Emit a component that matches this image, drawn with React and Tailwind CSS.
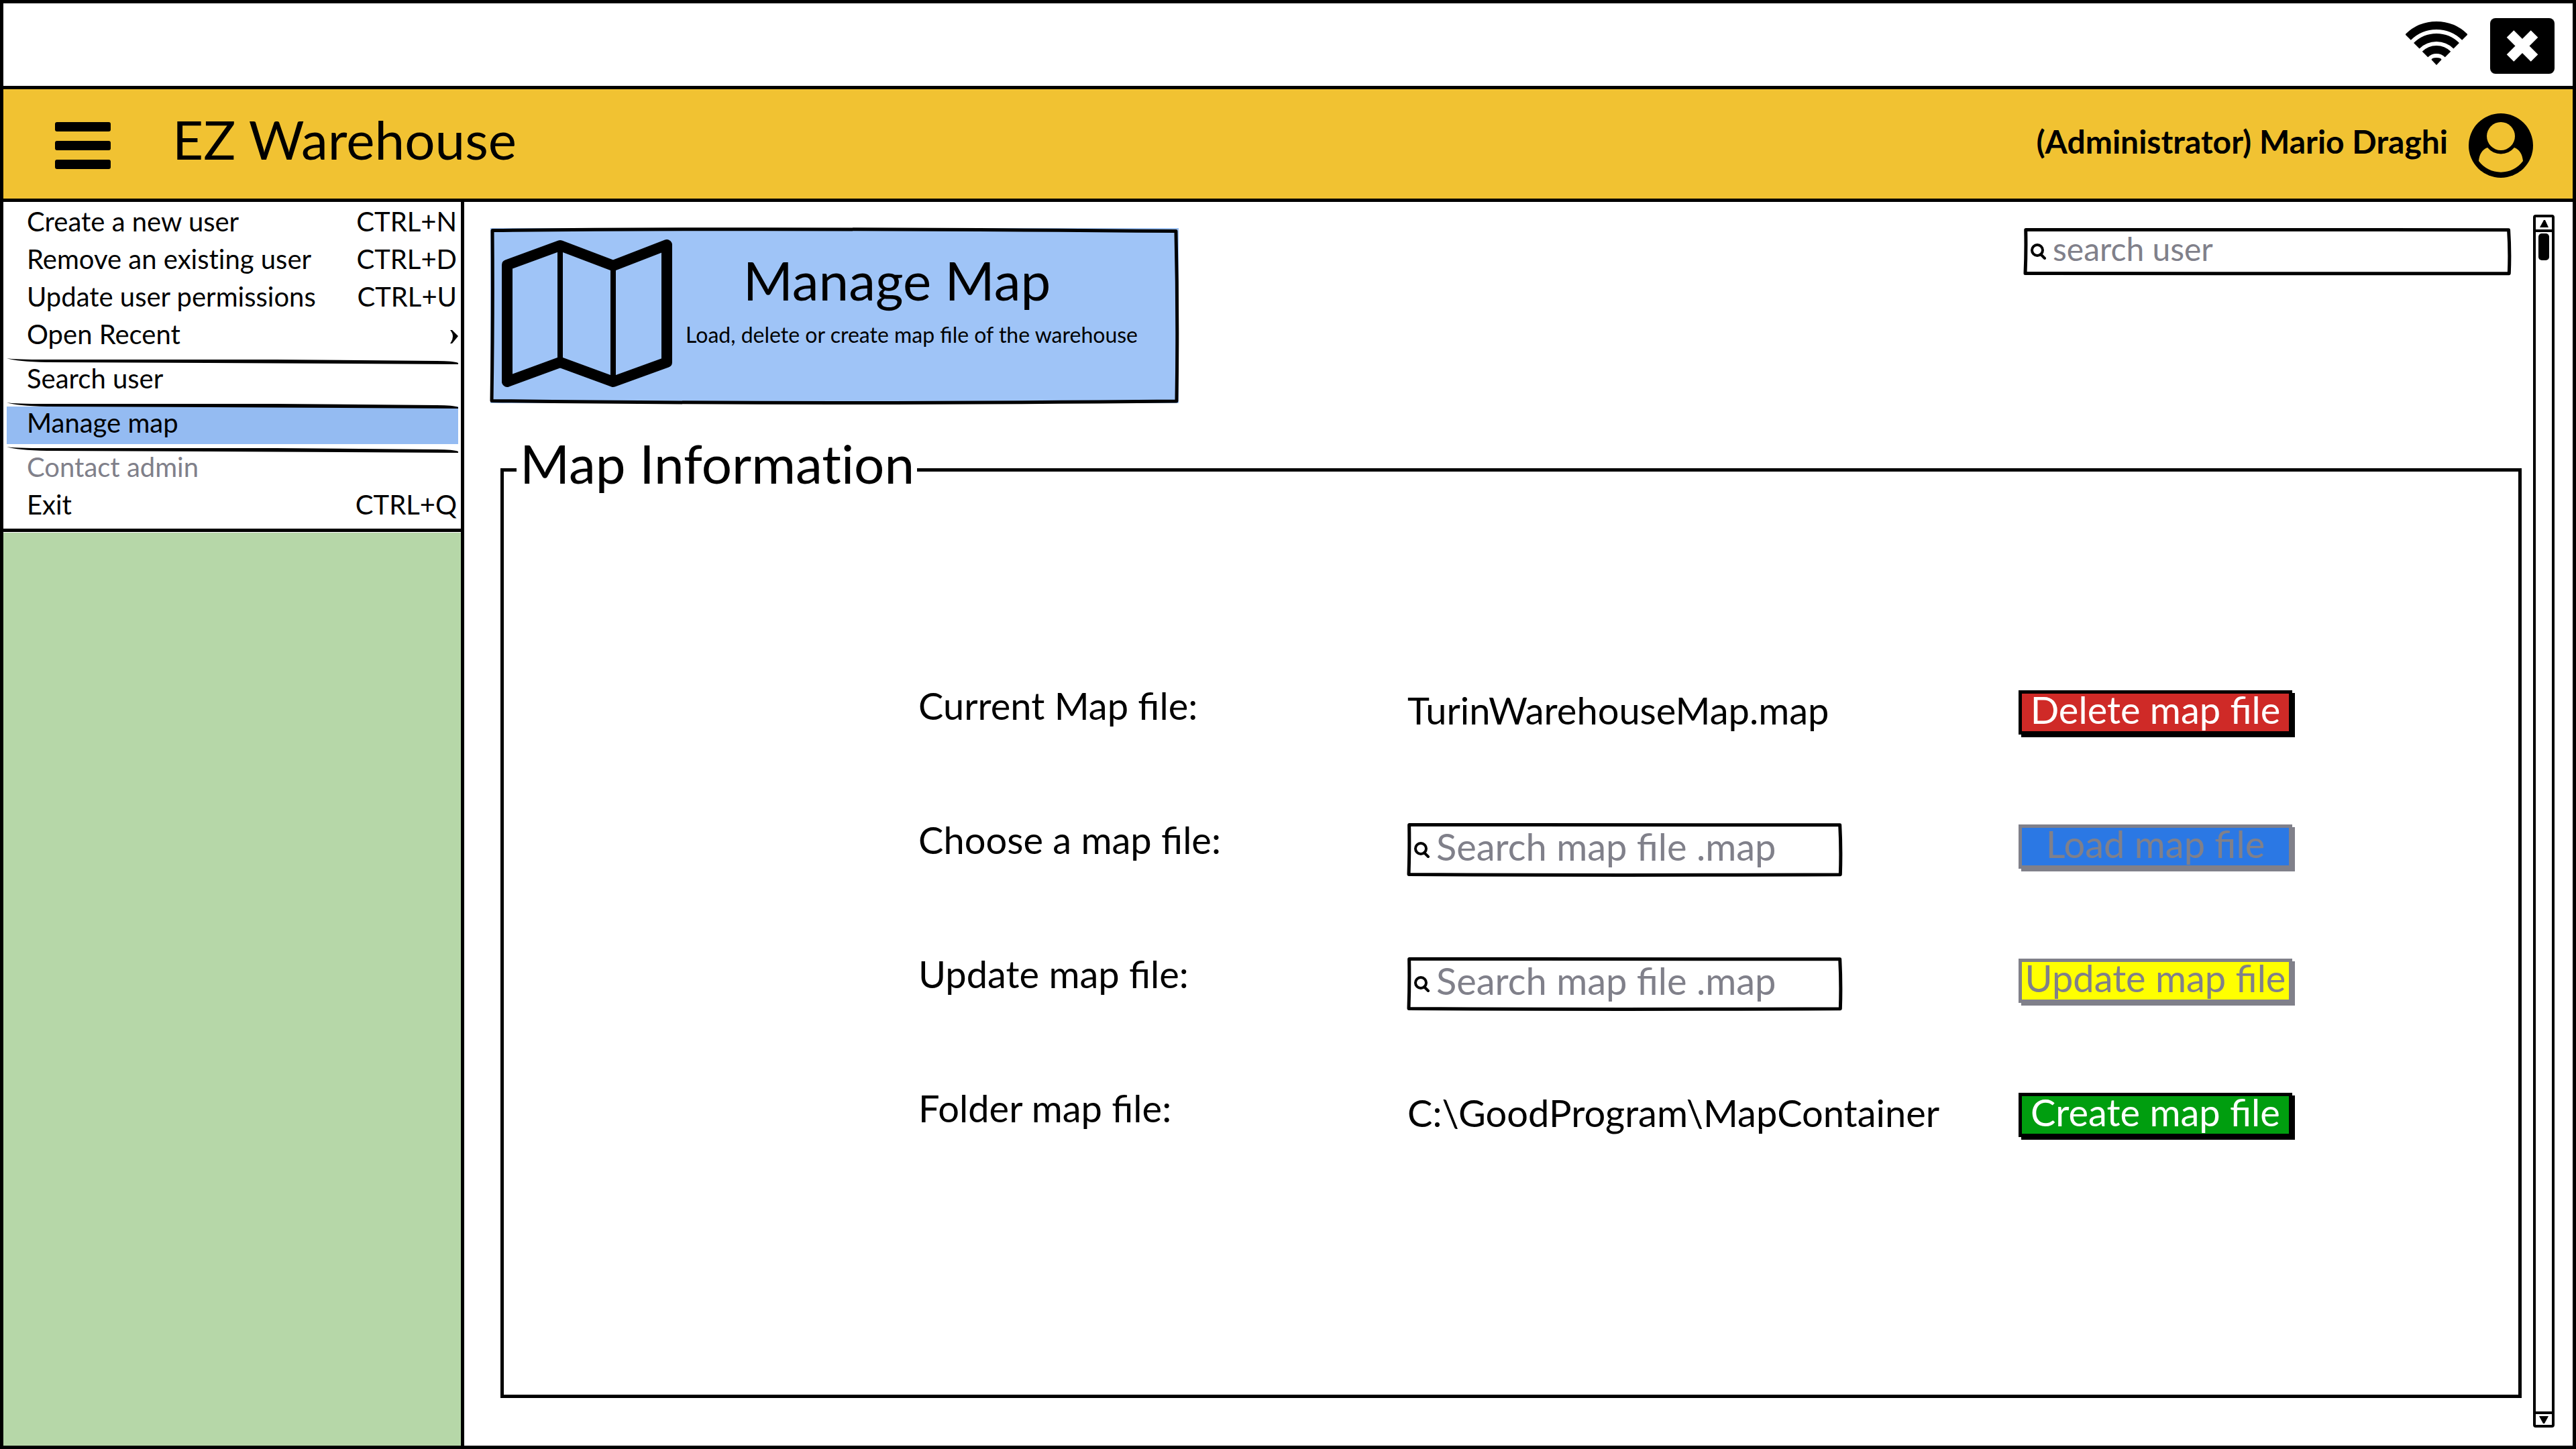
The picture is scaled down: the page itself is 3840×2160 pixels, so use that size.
import React from "react";

const menuGroups = [
  [
    { label: "Create a new user", shortcut: "CTRL+N" },
    { label: "Remove an existing user", shortcut: "CTRL+D" },
    { label: "Update user permissions", shortcut: "CTRL+U" },
    { label: "Open Recent", submenu: true },
  ],
  [{ label: "Search user" }],
  [{ label: "Manage map", active: true }],
  [
    { label: "Contact admin", disabled: true },
    { label: "Exit", shortcut: "CTRL+Q" },
  ],
];

/* Slightly uneven outline laid over a box, as if drawn by hand. */
function SketchOutline() {
  return (
    <svg
      className="pointer-events-none absolute inset-[2px] h-[calc(100%-4px)] w-[calc(100%-4px)] overflow-visible"
      viewBox="0 0 1000 1000"
      preserveAspectRatio="none"
      fill="none"
      stroke="black"
      strokeWidth="5"
      strokeLinejoin="round"
      aria-hidden="true"
    >
      <path
        vectorEffect="non-scaling-stroke"
        d="M1 6 Q400 -10 998 10 Q1001 500 999 996 Q450 1016 0 994 Q2 500 1 6 Z"
      />
    </svg>
  );
}

function WifiIcon() {
  return (
    <svg className="mb-2 h-[66px] w-[92px]" viewBox="0 0 92 66" fill="none" stroke="black" strokeWidth="12" role="img" aria-label="Wi-Fi">
      <path d="M3.6 23.6 A60 60 0 0 1 88.4 23.6" />
      <path d="M16.3 36.3 A42 42 0 0 1 75.7 36.3" />
      <path d="M29 49 A24 24 0 0 1 63 49" />
      <path d="M46 65 L38.5 57 Q39 54 46 54 Q53 54 53.5 57 Z" fill="black" stroke="none" />
    </svg>
  );
}

function CloseIcon() {
  return (
    <svg className="h-[83px] w-[96px]" viewBox="0 0 96 83" aria-hidden="true">
      <rect width="96" height="83" rx="8" />
      <path d="M30 23.5 L66 59.5 M66 23.5 L30 59.5" stroke="white" strokeWidth="15" />
    </svg>
  );
}

function MenuIcon() {
  return (
    <svg className="h-[70px] w-[83px]" viewBox="0 0 83 70" aria-hidden="true">
      <rect width="83" height="14" rx="3" />
      <rect y="28" width="83" height="14" rx="3" />
      <rect y="56" width="83" height="14" rx="3" />
    </svg>
  );
}

function AvatarIcon() {
  return (
    <svg className="size-24" viewBox="0 0 96 96" aria-hidden="true">
      <circle cx="48" cy="48" r="48" />
      <circle cx="48" cy="34" r="21" fill="#f1c232" />
      <path
        d="M28 51 C20 54 16 61 15 71 A41 41 0 0 0 81 71 C80 61 76 54 68 51 A26 26 0 0 1 28 51 Z"
        fill="#f1c232"
      />
    </svg>
  );
}

function MapIcon() {
  return (
    <svg className="h-[221px] w-[254px] shrink-0" viewBox="0 0 254 221" fill="none" stroke="black" strokeLinejoin="round" aria-hidden="true">
      <path d="M8 38 L87 9 L166 39 L246 8 V183 L166 212 L87 183 L8 212 Z" strokeWidth="16" />
      <path d="M87 9 V183 M166 39 V212" strokeWidth="8" />
    </svg>
  );
}

function SearchIcon() {
  return (
    <svg className="size-[24px] shrink-0" viewBox="0 0 24 24" fill="none" stroke="black" strokeWidth="4" strokeLinecap="round" aria-hidden="true">
      <circle cx="10" cy="10" r="8" />
      <path d="M15 16 L21 22" />
    </svg>
  );
}

function SearchField({ label, size }) {
  return (
    <label className={`relative flex items-center pl-[10px] pr-3 ${size}`}>
      <SketchOutline />
      <SearchIcon />
      <input
        type="text"
        placeholder={label}
        aria-label={label}
        className="ml-[9px] h-full w-full min-w-0 bg-transparent pb-[10px] outline-none placeholder:text-[#80808a]"
      />
    </label>
  );
}

function MenuItem({ item }) {
  return (
    <li>
      <button
        type="button"
        disabled={item.disabled}
        className={`flex h-14 w-full items-center justify-between pb-2 pl-[30px] text-left disabled:text-[#80808a] ${
          item.active ? "bg-[#94bbf2]" : ""
        }`}
      >
        <span>{item.label}</span>
        {item.shortcut && <span className="pr-[2px]">{item.shortcut}</span>}
        {item.submenu && (
          <svg className="mt-2 h-5 w-3" viewBox="0 0 12 20" aria-hidden="true">
            <path d="M0 0 L3 0 L12 9 L3 20 L0 20 Q8 9 0 0 Z" />
          </svg>
        )}
      </button>
    </li>
  );
}

function MenuDivider() {
  return (
    <svg className="block h-[10px] w-full overflow-visible" viewBox="0 0 672 10" preserveAspectRatio="none" aria-hidden="true">
      <path d="M0 4 Q10 6 60 6 L400 6 L640 8 Q665 8 672 11 L672 13 L300 11 L60 10 Q15 9 0 4 Z" />
    </svg>
  );
}

function Sidebar() {
  return (
    <aside className="flex w-[687px] shrink-0 flex-col border-r-[5px] border-black">
      <nav className="border-b-[5px] border-black bg-white pb-1 pl-[5px] pr-1 pt-[5px] text-[40px] leading-[48px] [font-variant-ligatures:none]">
        {menuGroups.map((group, index) => (
          <React.Fragment key={index}>
            {index > 0 && <MenuDivider />}
            <ul>
              {group.map((item) => (
                <MenuItem key={item.label} item={item} />
              ))}
            </ul>
          </React.Fragment>
        ))}
      </nav>
      <div className="flex-1 border-t border-white bg-[#b6d7a8]" />
    </aside>
  );
}

function MapButton({ children, tone, disabled }) {
  return (
    <button
      type="button"
      disabled={disabled}
      className={`mt-[9px] flex h-[66px] w-[408px] items-center justify-center whitespace-nowrap border-[5px] pb-2 leading-[48px] ${
        disabled
          ? "border-[#80808a] text-[#80808a] shadow-[4px_4px_0_#80808a]"
          : "border-black text-white shadow-[4px_4px_0_black]"
      } ${tone}`}
    >
      {children}
    </button>
  );
}

function MapRow({ label, children, action }) {
  return (
    <div className="grid h-[200px] grid-cols-[729fr_911fr_408fr] items-start">
      <span>{label}</span>
      <div className="pt-[7px]">{children}</div>
      {action}
    </div>
  );
}

function ScrollBar() {
  return (
    <div className="mb-[27px] mr-[27px] mt-[19px] flex w-8 shrink-0 flex-col rounded-[4px] border-4 border-black">
      <button type="button" aria-label="Scroll up" className="flex h-[22px] w-full items-center justify-center border-b-4 border-black">
        <svg className="h-[11px] w-[13px]" viewBox="0 0 13 11" aria-hidden="true">
          <path d="M6 0 L8 0 L13 11 L0 11 Z" />
        </svg>
      </button>
      <div className="flex-1 px-1 pt-[2px]">
        <div className="h-[40px] rounded-[5px] bg-black" />
      </div>
      <button type="button" aria-label="Scroll down" className="flex h-[20px] w-full items-center justify-center border-t-4 border-black">
        <svg className="h-[11px] w-[14px]" viewBox="0 0 14 11" aria-hidden="true">
          <path d="M0 0 L14 0 L8 11 L6 11 Z" />
        </svg>
      </button>
    </div>
  );
}

export default function App() {
  return (
    <div className="flex min-h-screen flex-col border-[5px] border-black bg-white font-['Lato',sans-serif] text-black">
      <div className="flex h-[128px] items-center justify-end gap-[34px] border-b-[5px] border-black pr-[27px] pt-1">
        <WifiIcon />
        <button type="button" aria-label="Close">
          <CloseIcon />
        </button>
      </div>

      <header className="flex h-[168px] items-center border-b-[5px] border-black bg-[#f1c232] pl-[77px] pr-[59px] pt-1">
        <button type="button" aria-label="Menu">
          <MenuIcon />
        </button>
        <h1 className="ml-[92px] pb-5 text-[80px] leading-[96px]">EZ Warehouse</h1>
        <span className="ml-auto pb-3 text-[48px] font-bold leading-[56px]">(Administrator) Mario Draghi</span>
        <button type="button" aria-label="Account" className="ml-[31px]">
          <AvatarIcon />
        </button>
      </header>

      <div className="flex flex-1">
        <Sidebar />
        <main className="flex flex-1 flex-col">
          <div className="flex items-start justify-between pl-[39px] pr-[33px] pt-[39px]">
            <section className="relative flex h-[261px] w-[1026px] bg-[#9fc4f7] pl-[17px] pt-[17px]">
              <SketchOutline />
              <MapIcon />
              <div className="ml-5 mt-5 text-center">
                <h2 className="pr-11 text-[80px] leading-[80px]">Manage Map</h2>
                <p className="mt-[22px] whitespace-nowrap text-[32px] leading-[40px]">
                  Load, delete or create map file of the warehouse
                </p>
              </div>
            </section>
            <SearchField label="search user" size="h-[70px] w-[726px] text-[48px]" />
          </div>

          <fieldset className="mb-[71px] ml-[54px] mr-[17px] mt-[49px] flex-1 border-[5px] border-black">
            <legend className="ml-[19px] pb-5 pl-[5px] pr-1 text-[80px] leading-[80px] [font-variant-ligatures:none]">
              Map Information
            </legend>
            <div className="pl-[618px] pr-[337px] pt-[270px] text-[56px] leading-[64px]">
              <MapRow label="Current Map file:" action={<MapButton tone="bg-[#cf2a27]">Delete map file</MapButton>}>
                TurinWarehouseMap.map
              </MapRow>
              <MapRow label="Choose a map file:" action={<MapButton tone="bg-[#2b78e4]" disabled>Load map file</MapButton>}>
                <SearchField label="Search map file .map" size="h-[79px] w-[648px]" />
              </MapRow>
              <MapRow label="Update map file:" action={<MapButton tone="bg-[#ffff00]" disabled>Update map file</MapButton>}>
                <SearchField label="Search map file .map" size="h-[79px] w-[648px]" />
              </MapRow>
              <MapRow label="Folder map file:" action={<MapButton tone="bg-[#009e0f]">Create map file</MapButton>}>
                C:\GoodProgram\MapContainer
              </MapRow>
            </div>
          </fieldset>
        </main>
        <ScrollBar />
      </div>
    </div>
  );
}
